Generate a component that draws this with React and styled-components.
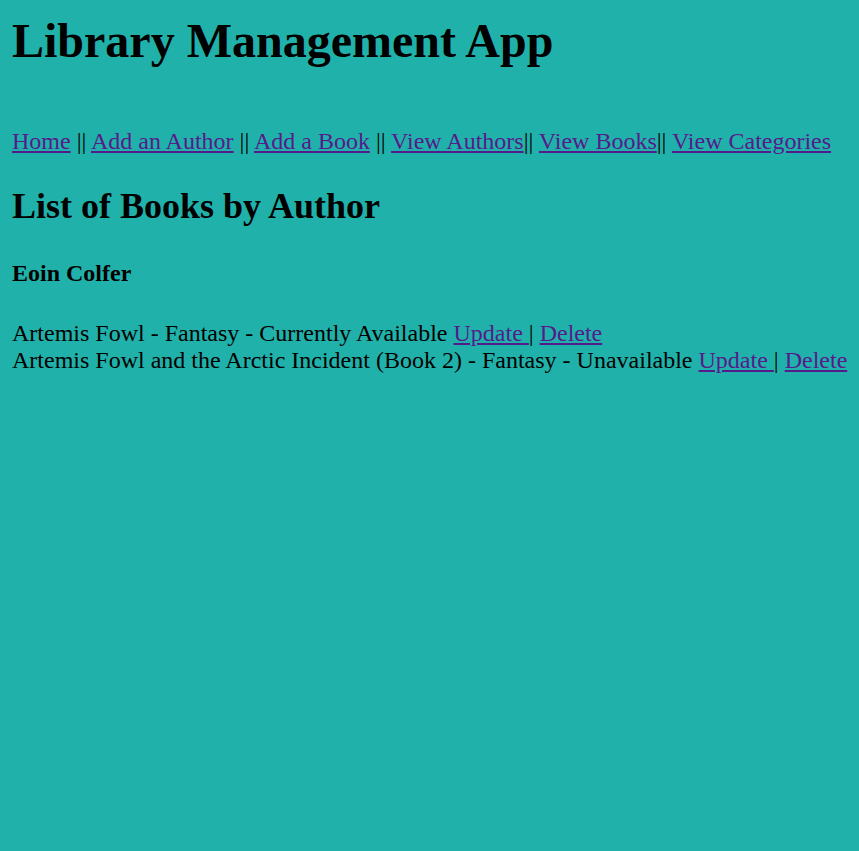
import React from "react";
import styled, { createGlobalStyle } from "styled-components";

const GlobalStyle = createGlobalStyle`
	html, body {
		margin: 0;
		padding: 0;
		background-color: #20b2aa;
	}
	body {
		font-family: "Liberation Serif", "Times New Roman", serif;
		font-size: 24px;
		color: #000;
	}
`;

const books = [
	{ title: "Artemis Fowl", category: "Fantasy", status: "Currently Available" },
	{
		title: "Artemis Fowl and the Arctic Incident (Book 2)",
		category: "Fantasy",
		status: "Unavailable",
	},
];

export default function App() {
	return (
		<Page>
			<GlobalStyle />
			<Title>Library Management App</Title>
			<Nav>
				<Link href="#">Home</Link> || <Link href="#">Add an Author</Link> ||{" "}
				<Link href="#">Add a Book</Link> || <Link href="#">View Authors</Link>||{" "}
				<Link href="#">View Books</Link>|| <Link href="#">View Categories</Link>
			</Nav>
			<Heading>List of Books by Author</Heading>
			<AuthorName>Eoin Colfer</AuthorName>
			<BookList>
				{books.map((book, index) => (
					<BookRow key={index}>
						{book.title} - {book.category} - {book.status}{" "}
						<Link href="#">Update </Link>| <Link href="#">Delete</Link>
					</BookRow>
				))}
			</BookList>
		</Page>
	);
}

const Page = styled.div`
	padding: 13px 12px 12px;
	min-height: 100vh;
	box-sizing: border-box;
`;

const Title = styled.h1`
	font-size: 48px;
	font-weight: bold;
	margin: 0;
`;

const Nav = styled.nav`
	margin-top: 60px;
	white-space: nowrap;
`;

const Link = styled.a`
	color: #551a8b;
	text-decoration: underline;
`;

const Heading = styled.h2`
	font-size: 36px;
	font-weight: bold;
	margin: 30px 0 0;
`;

const AuthorName = styled.h4`
	font-size: 24px;
	font-weight: bold;
	margin: 33px 0 0;
`;

const BookList = styled.div`
	margin-top: 33px;
`;

const BookRow = styled.div`
	white-space: nowrap;
`;
